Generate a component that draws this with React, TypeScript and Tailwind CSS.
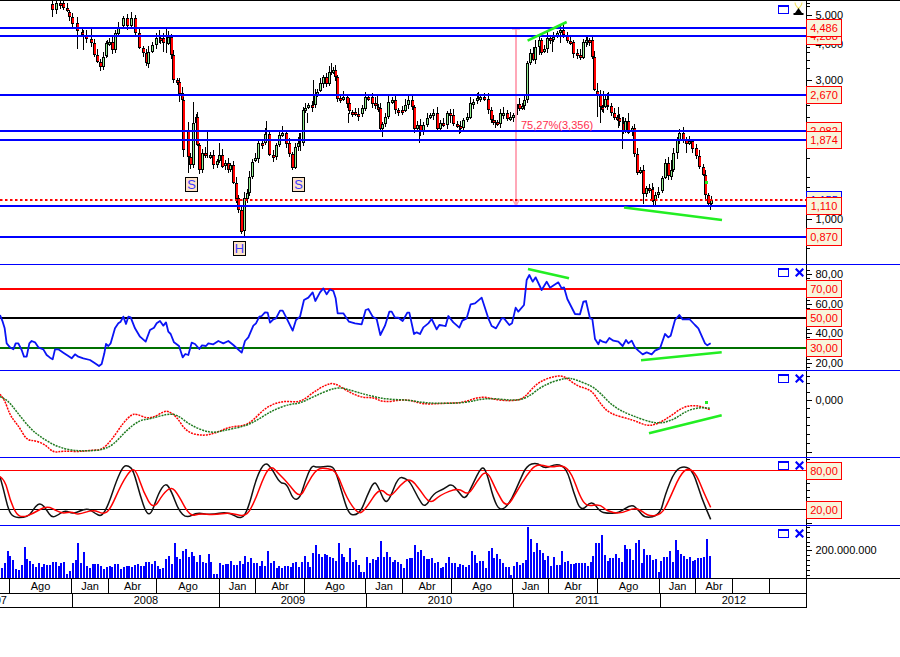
import type { ReactNode } from "react";

type Pt = [number, number];

// traced from the chart: x (crop px), y (crop px); crops are 3x, offset by x0 / y0
const toPts = (flat: number[], x0: number, y0: number): Pt[] => {
  const out: Pt[] = [];
  for (let i = 0; i < flat.length; i += 2) out.push([x0 + flat[i] / 3, y0 + flat[i + 1] / 3]);
  return out;
};

const smooth = (pts: Pt[]) => {
  let d = `M${pts[0][0]} ${pts[0][1]}`;
  for (let i = 1; i < pts.length - 1; i++) {
    const mx = (pts[i][0] + pts[i + 1][0]) / 2;
    const my = (pts[i][1] + pts[i + 1][1]) / 2;
    d += ` Q${pts[i][0]} ${pts[i][1]} ${mx} ${my}`;
  }
  const last = pts[pts.length - 1];
  return d + ` L${last[0]} ${last[1]}`;
};

const poly = (pts: Pt[]) => pts.map((p) => p.join(",")).join(" ");

const closes: Pt[] = [
  ...toPts([155,30,168,10,180,10,190,25,200,35,208,50,215,70,232,95,245,105,258,118,272,130,283,165,292,185,301,200,310,170,318,130,326,125,335,150,345,100,355,80,368,55,380,80,393,55,405,100,418,145,428,160,437,190,445,155,455,135,468,115,480,115,490,130,505,110,512,165,520,240,530,245,538,280,547,300,549,450,563,390,565,470,571,495,580,368,589,350,592,435,598,510,607,460,616,470,630,465,640,495,650,482,656,465,665,500,675,490,685,510,691,495,700,548,707,595,715,630,724,695,733,595,742,578,748,530,757,485,766,475,775,428,785,430,795,402,808,465,818,470,827,435,836,405,845,398,858,430,868,462,877,505,886,442,895,430], 0, 0),
  ...toPts([8,330,15,325,25,315,35,315,45,285,52,275,60,250,70,230,78,250,88,215,98,210,105,230,112,295,120,300,130,290,140,310,147,335,155,335,165,342,175,342,185,325,195,290,205,290,215,310,225,320,235,325,240,388,247,372,255,350,265,305,275,300,285,330,295,330,305,332,315,315,325,300,335,322,342,388,350,375,360,395,370,375,380,355,390,345,400,340,410,388,420,370,430,375,440,340,450,345,460,372,470,378,480,385,490,360,500,352,510,308,520,305,530,295,540,290,553,298,563,330,572,360,580,365,590,372,600,340,610,338,620,355,630,350,640,345,648,312,657,328,665,318,672,300,680,190,690,160,698,180,706,140,716,120,724,158,732,148,740,115,750,118,760,112,770,100,780,90,790,105,800,122,810,125,820,160,830,165,840,172,848,125,858,120,868,120,875,172,882,272,892,285], 300, 0),
  ...toPts([0,320,5,322,15,298,22,318,32,338,42,352,50,355,58,368,68,392,76,362,85,398,95,385,103,462,112,518,120,510,128,583,138,565,148,568,156,603,165,585,175,575,185,535,195,490,205,530,213,510,220,458,230,420,238,400,248,420,258,432,268,422,275,445,288,468,298,500,310,525,315,585,323,612,332,600], 600, 0),
];

const longWicks: [number, number, number][] = [
  ...([[155,0,50],[232,70,147],[250,90,150],[274,85,140],[322,120,170],[445,150,205],[478,90,130],[488,100,155],[497,85,160],[520,165,240],[538,245,305],[548,300,470],[563,365,518],[580,305,390],[598,470,515],[622,395,475],[656,430,470],[720,630,695],[733,575,708],[799,363,430],[845,378,405],[858,405,430],[898,400,430]] as number[][]).map((w): [number, number, number] => [w[0] / 3, w[1] / 3, w[2] / 3]),
  ...([[0,400,452],[22,340,370],[38,240,315],[92,188,225],[145,340,368],[195,280,330],[232,285,325],[247,380,410],[325,288,320],[342,375,400],[358,390,428],[450,327,370],[478,375,402],[535,277,300],[585,360,385],[680,185,300],[705,120,180],[716,113,165],[757,115,155],[780,80,128],[860,112,135],[892,250,350]] as number[][]).map((w): [number, number, number] => [300 + w[0] / 3, w[1] / 3, w[2] / 3]),
  ...([[0,300,370],[10,272,340],[24,275,320],[55,320,385],[67,350,447],[85,338,395],[128,530,613],[160,560,615],[212,480,540],[230,410,478],[258,425,460],[275,420,455],[331,600,630]] as number[][]).map((w): [number, number, number] => [600 + w[0] / 3, w[1] / 3, w[2] / 3]),
];

const rsi = [
  ...toPts([0,165,8,185,14,205,20,250,30,262,40,268,47,250,55,250,65,270,72,290,80,290,88,250,95,243,105,247,115,262,130,268,140,285,150,293,158,298,165,268,175,268,190,278,205,288,215,295,225,283,235,290,250,295,270,300,285,310,297,318,305,312,313,280,318,252,325,258,332,250,345,205,355,190,362,185,370,170,378,192,385,170,392,172,405,205,420,230,437,245,450,210,462,203,470,190,480,183,490,197,498,187,505,215,512,222,522,247,537,258,548,292,556,282,565,285,575,248,585,252,598,267,606,256,618,258,625,250,640,253,655,243,670,250,685,243,700,255,725,278,735,243,745,232,760,197,768,190,778,170,785,168,795,157,803,158,810,188,820,178,828,175,840,152,848,152,860,175,878,212,888,180], 0, 260),
  ...toPts([0,170,12,120,25,113,38,97,46,123,60,97,70,85,80,103,90,88,100,93,107,115,113,160,130,160,147,185,165,190,185,193,197,150,205,147,218,170,230,177,241,225,255,197,268,155,275,155,285,173,295,173,308,183,322,158,328,158,342,222,350,217,360,222,370,202,385,190,395,177,410,208,418,195,430,197,437,198,445,168,460,187,478,203,487,182,500,175,512,133,525,130,545,113,565,175,575,198,588,205,605,175,612,175,628,195,636,190,647,143,655,155,672,135,680,60,688,45,698,65,707,52,725,90,740,65,750,83,775,67,785,85,792,82,802,117,825,162,840,163,850,125,858,123,870,175,877,177,885,237,895,253], 300, 260),
  ...toPts([0,240,8,245,18,248,28,234,40,242,55,245,68,258,78,240,85,250,95,242,105,262,115,272,128,283,140,277,155,283,165,272,180,265,195,222,205,232,212,227,225,180,238,165,248,178,258,178,268,177,285,195,295,205,315,250,322,256,332,250], 600, 260),
];

const macdRed = [
  ...toPts([0,403,12,415,30,465,45,485,60,505,80,540,105,542,135,553,160,578,190,573,240,575,280,570,305,570,335,540,370,488,395,463,410,462,440,475,465,470,490,455,505,453,530,470,560,517,610,528,650,518,690,500,735,497,760,480,800,440,850,422], 0, 260),
  ...toPts([0,428,40,397,75,375,103,368,145,395,185,413,220,412,250,427,300,420,330,420,370,433,430,430,490,428,545,408,590,420,640,423,672,415,710,370,750,352,790,345,830,378,875,390], 300, 260),
  ...toPts([0,430,30,462,100,480,140,498,170,493,210,470,250,440,290,435,332,450], 600, 260),
];
const macdGreen = [
  ...toPts([0,410,20,417,50,455,90,505,120,530,170,560,220,572,260,573,305,570,340,555,380,510,420,480,450,477,500,462,530,463,570,495,630,520,680,510,740,497,780,475,820,450,870,432], 0, 260),
  ...toPts([0,430,40,410,110,380,150,390,200,405,260,418,330,420,380,430,490,430,560,413,640,422,680,415,730,375,800,352,830,360,875,378], 300, 260),
  ...toPts([0,398,40,440,90,465,170,493,220,480,260,452,300,442,332,445], 600, 260),
];

const stochBlack = [
  ...toPts([0,65,10,100,25,165,40,187,70,188,90,180,105,155,122,143,140,165,155,188,175,180,195,165,220,178,260,158,285,175,305,185,325,150,350,75,370,33,385,32,400,45,420,120,440,178,455,175,475,115,497,82,515,110,535,165,560,190,590,172,630,180,685,170,725,195,745,160,770,65,795,20,815,40,840,85,860,85,880,135], 0, 455),
  ...toPts([0,130,15,80,35,30,50,38,90,32,105,42,125,110,145,175,165,182,185,165,200,125,222,78,235,95,255,145,270,130,295,65,315,70,330,80,355,130,375,160,400,115,430,103,455,85,475,110,495,135,515,95,545,32,560,50,580,130,600,170,630,145,660,75,680,32,710,22,735,42,770,25,800,40,820,110,843,172,875,135], 300, 455),
  ...toPts([0,170,20,175,55,175,95,147,115,165,135,190,180,180,195,120,225,45,255,32,280,50,305,130,332,193], 600, 455),
];
const stochRed = [
  ...toPts([0,65,15,75,30,135,50,180,70,187,100,175,140,152,175,170,190,175,215,170,235,180,280,163,310,178,330,165,365,85,395,40,410,50,430,110,460,165,490,115,515,95,535,120,570,185,600,175,640,180,690,172,735,187,760,150,795,55,815,33,835,55,860,80], 0, 455),
  ...toPts([0,130,20,90,50,40,85,40,110,50,140,130,175,178,195,165,240,95,270,130,300,90,330,68,360,105,390,148,420,120,475,98,505,122,530,80,560,42,590,110,620,160,650,110,680,60,710,25,750,38,790,30,815,55,840,125,860,155], 300, 455),
  ...toPts([0,147,20,168,60,177,110,155,145,185,185,178,205,140,240,60,265,37,290,60,310,110,332,157], 600, 455),
];

// bar tops in the 3x crop, the base sits at 370
const volumeTops = [
  340,325,287,303,315,342,345,330,277,312,318,327,335,325,335,328,330,330,322,322,333,325,322,357,348,325,315,265,325,292,333,340,328,328,327,332,342,337,333,335,328,327,343,335,333,333,335,330,328,332,333,322,322,327,318,333,342,340,312,303,327,265,307,312,287,283,305,290,303,322,300,322,325,297,322,357,357,323,330,327,327,318,330,330,318,327,303,322,309,323,323,333,318,333,288,325,318,338,333,338,333,333,337,323,322,337,
  320,303,320,335,295,270,298,307,298,300,305,310,318,265,298,307,322,280,320,315,330,350,350,307,325,312,315,305,258,305,292,305,322,315,322,327,340,312,310,310,270,290,285,303,312,312,308,325,322,340,335,323,305,323,323,335,327,330,335,330,288,300,323,318,318,338,288,278,310,298,312,325,335,337,360,333,322,330,323,315,215,252,290,265,285,295,315,303,333,307,330,330,288,322,318,328,328,323,323,323,323,333,322,303,263,263,
  240,300,318,308,308,297,310,322,270,282,282,315,265,255,323,282,300,300,315,312,350,318,305,305,288,322,255,285,298,303,312,307,318,315,310,310,305,252,302,
];

const Candles = () => (
  <g shapeRendering="crispEdges">
    {longWicks.map(([x, a, b], i) => (
      <line key={i} x1={Math.round(x) + 0.5} x2={Math.round(x) + 0.5} y1={a} y2={b} stroke="#000" />
    ))}
    {closes.map(([fx, close], i) => {
      const x = Math.round(fx);
      const open = i === 0 ? close - 6 : closes[i - 1][1];
      const top = Math.round(Math.min(open, close));
      const h = Math.max(3, Math.round(Math.abs(close - open)));
      const up = close < open;
      const wick = 2 + ((i * 7) % 5);
      return (
        <g key={i}>
          <line x1={x + 0.5} x2={x + 0.5} y1={top - wick} y2={top + h + 1 + ((i * 3) % 4)} stroke="#000" />
          <rect x={x - 1} y={top} width={3} height={h} fill="#000" />
          {up ? (
            <rect x={x} y={top + 1} width={1} height={Math.max(1, h - 2)} fill="#90ee90" />
          ) : (
            <rect x={x} y={top + 1} width={2} height={Math.max(1, h - 2)} fill="#f00" />
          )}
        </g>
      );
    })}
  </g>
);

const HLine = ({ y, color, w = 2 }: { y: number; color: string; w?: number }) => (
  <line x1={0} x2={806} y1={y} y2={y} stroke={color} strokeWidth={w} shapeRendering="crispEdges" />
);

const Slash = ({ a, b }: { a: Pt; b: Pt }) => (
  <line x1={a[0]} y1={a[1]} x2={b[0]} y2={b[1]} stroke="#22ee22" strokeWidth={2.6} />
);

const WindowIcons = ({ className, close = true }: { className: string; close?: boolean }) => (
  <div className={`absolute flex items-center gap-[6px] ${className}`}>
    <div className="w-[11px] h-[9px] border border-t-2 border-[#0000ff]" />
    {close && (
      <svg width="9" height="9" viewBox="0 0 9 9">
        <path d="M0.7 0.7L8.3 8.3M8.3 0.7L0.7 8.3" stroke="#0000ff" strokeWidth="2.2" />
      </svg>
    )}
  </div>
);

const Hourglass = () => (
  <svg className="absolute left-[793px] top-[1px]" width="11" height="13" viewBox="0 0 11 13">
    <path d="M2 0.5C2 4 4 5 5.5 6.5C7 5 9 4 9 0.5" fill="#fff" stroke="#f2e36a" strokeWidth="1.2" />
    <path d="M5.5 6L9 11H2Z" fill="#000" />
    <rect x="0.5" y="11" width="10" height="2" fill="#000" />
  </svg>
);

const Marker = ({ children, className }: { children: string; className: string }) => (
  <div className={`absolute w-[13px] h-[15px] flex items-center justify-center bg-[#fde3c8] border border-black text-[13px] text-[#3a3aff] ${className}`}>
    {children}
  </div>
);

const Tag = ({ y, top, text, blue }: { y: number; top: number; text: string; blue?: boolean }) => (
  <div
    className={`absolute left-[-1px] w-[36px] h-[18px] flex items-center justify-center bg-[#f7f5dc] border text-[11px] ${
      blue ? "border-[#0000ff] text-[#0000ff]" : "border-[#f00] text-[#f00]"
    }`}
    style={{ top: y - top - 9 }}
  >
    {text}
  </div>
);

type PanelProps = {
  top: number;
  height: number;
  className: string;
  minor: number[];
  major: [number, string][];
  chart: ReactNode;
  tags?: { y: number; text: string; blue?: boolean }[];
  children?: ReactNode;
};

const Panel = ({ top, height, className, minor, major, chart, tags = [], children }: PanelProps) => (
  <div className={`relative flex w-[900px] shrink-0 border-b ${className}`}>
    <svg className="w-[806px] h-full" viewBox={`0 ${top} 806 ${height}`}>
      {chart}
    </svg>
    <div className="relative w-[94px] h-full border-l border-black">
      <svg className="absolute left-0 top-0 w-[93px] h-full" viewBox={`0 ${top} 93 ${height}`}>
        {minor.map((y) => (
          <line key={y} x1={0} x2={3} y1={y} y2={y} stroke="#000" shapeRendering="crispEdges" />
        ))}
        {major.map(([y, label]) => (
          <g key={y}>
            <line x1={0} x2={5} y1={y} y2={y} stroke="#000" shapeRendering="crispEdges" />
            <text x={8.5} y={y + 4} fill="#000" className="text-[11px]">
              {label}
            </text>
          </g>
        ))}
      </svg>
      {tags.map((t) => (
        <Tag key={t.text} y={t.y} top={top} text={t.text} blue={t.blue} />
      ))}
    </div>
    {children}
  </div>
);

const monthCells: [string, string][] = [
  ["w-[10px]", ""], ["w-[62px]", "Ago"], ["w-[37px]", "Jan"], ["w-[48px]", "Abr"], ["w-[63px]", "Ago"], ["w-[36px]", "Jan"],
  ["w-[49px]", "Abr"], ["w-[61px]", "Ago"], ["w-[37px]", "Jan"], ["w-[49px]", "Abr"], ["w-[61px]", "Ago"], ["w-[36px]", "Jan"],
  ["w-[49px]", "Abr"], ["w-[62px]", "Ago"], ["w-[36px]", "Jan"], ["w-[37px]", "Abr"], ["w-[37px]", ""], ["w-[36px]", ""],
];

const yearCells: [string, string][] = [
  ["w-[147px]", "2008"], ["w-[147px]", "2009"], ["w-[147px]", "2010"], ["w-[147px]", "2011"], ["w-[146px]", "2012"],
];

const App = () => {
  return (
    <div className="w-[900px] h-[657px] bg-white border-t border-black flex flex-col overflow-hidden font-['Liberation_Sans',Arial,sans-serif] text-black">
      <Panel
        top={1}
        height={263}
        className="h-[264px] border-[#0000ff]"
        minor={[3, 6, 47, 52, 60, 68, 105, 117, 158, 177, 187, 248]}
        major={[[15, "5,000"], [44, "4,000"], [80, "3,000"], [219, "1,000"]]}
        tags={[
          { y: 36, text: "4,288" },
          { y: 28, text: "4,486" },
          { y: 95, text: "2,670" },
          { y: 131, text: "2,082" },
          { y: 140, text: "1,874" },
          { y: 200, text: "1,155", blue: true },
          { y: 206, text: "1,110" },
          { y: 237, text: "0,870" },
        ]}
        chart={
          <>
            <Candles />
            <line x1={516} x2={516} y1={28} y2={205} stroke="#ffa8b8" strokeWidth={2} />
            <path d="M512 29H520M512.5 199L516 206L519.5 199" stroke="#ffa8b8" strokeWidth={1.4} fill="none" />
            {[28, 36, 95, 131, 140, 206, 237].map((y) => (
              <HLine key={y} y={y} color="#0000ff" />
            ))}
            <line x1={0} x2={806} y1={200} y2={200} stroke="#f00" strokeWidth={2} strokeDasharray="2.5 2.5" />
            <text x={521} y={129} fill="#ff3050" className="text-[11px]">
              75,27%(3,356)
            </text>
            <Slash a={[527.6, 40.6]} b={[566.7, 22]} />
            <Slash a={[624, 207.5]} b={[722, 220]} />
            <rect x={705} y={181} width={3} height={3} fill="#22ee22" />
          </>
        }
      >
        <WindowIcons close={false} className="left-[778px] top-[4px]" />
        <Hourglass />
        <Marker className="left-[185px] top-[176px]">S</Marker>
        <Marker className="left-[292px] top-[176px]">S</Marker>
        <Marker className="left-[233px] top-[240px]">H</Marker>
      </Panel>

      <Panel
        top={265}
        height={105}
        className="h-[106px] border-[#0000ff]"
        minor={[270, 278, 300, 308, 329, 337, 359, 367]}
        major={[[274, "80,00"], [304, "60,00"], [333, "40,00"], [363, "20,00"]]}
        tags={[
          { y: 289, text: "70,00" },
          { y: 318, text: "50,00" },
          { y: 348, text: "30,00" },
        ]}
        chart={
          <>
            <HLine y={289} color="#f00" />
            <HLine y={318} color="#000" />
            <HLine y={348} color="#007000" />
            <polyline points={poly(rsi)} fill="none" stroke="#0a14f5" strokeWidth={1.8} strokeLinejoin="round" />
            <Slash a={[528, 269]} b={[569, 278.3]} />
            <Slash a={[641, 360.3]} b={[721.7, 352.3]} />
          </>
        }
      >
        <WindowIcons className="left-[778px] top-[3px]" />
      </Panel>

      <Panel
        top={371}
        height={86}
        className="h-[87px] border-[#0000ff]"
        minor={[376, 383, 392, 408, 417, 425, 434, 443]}
        major={[[400, "0,000"], [452, ""]]}
        chart={
          <>
            <path d={smooth(macdRed)} fill="none" stroke="#f00" strokeWidth={1.5} strokeDasharray="2 1" />
            <path d={smooth(macdGreen)} fill="none" stroke="#1f7a1f" strokeWidth={1.5} strokeDasharray="2 1" />
            <Slash a={[649, 433.3]} b={[721.7, 415.3]} />
            <rect x={705} y={401} width={3} height={3} fill="#22ee22" />
          </>
        }
      >
        <WindowIcons className="left-[778px] top-[3px]" />
      </Panel>

      <Panel
        top={458}
        height={67}
        className="h-[68px] border-[#0000ff]"
        minor={[459, 464, 483, 490, 497, 517]}
        major={[[523, ""]]}
        tags={[
          { y: 471, text: "80,00" },
          { y: 510, text: "20,00" },
        ]}
        chart={
          <>
            <HLine y={470} color="#f00" w={1} />
            <HLine y={509} color="#000" w={1} />
            <path d={smooth(stochBlack)} fill="none" stroke="#111" strokeWidth={1.5} />
            <path d={smooth(stochRed)} fill="none" stroke="#f00" strokeWidth={1.5} />
          </>
        }
      >
        <WindowIcons className="left-[778px] top-[3px]" />
      </Panel>

      <Panel
        top={526}
        height={52}
        className="h-[53px] border-black"
        minor={[527, 532, 537, 542, 546, 555, 560, 565, 570, 575]}
        major={[[550, "200.000.000"]]}
        chart={
          <g shapeRendering="crispEdges">
            {volumeTops.map((t, i) => (
              <rect key={i} x={Math.round(1 + i * 2.83)} y={455 + t / 3} width={2} height={(370 - t) / 3} fill="#0000ff" />
            ))}
          </g>
        }
      >
        <WindowIcons className="left-[778px] top-[3px]" />
      </Panel>

      <div className="flex w-[807px] h-[15px] shrink-0 border-b border-r border-black text-[11px]">
        {monthCells.map(([w, label], i) => (
          <div key={i} className={`${w} shrink-0 border-r border-black last:border-r-0 flex items-center justify-center`}>
            {label}
          </div>
        ))}
      </div>
      <div className="flex w-[807px] h-[14px] shrink-0 border-b border-r border-black text-[11px]">
        <div className="w-[73px] shrink-0 overflow-hidden border-r border-black flex items-center justify-end pr-[65px]">2007</div>
        {yearCells.map(([w, label], i) => (
          <div key={label} className={`${w} shrink-0 flex items-center justify-center ${i < 4 ? "border-r border-black" : ""}`}>
            {label}
          </div>
        ))}
      </div>
    </div>
  );
};

export default App;
